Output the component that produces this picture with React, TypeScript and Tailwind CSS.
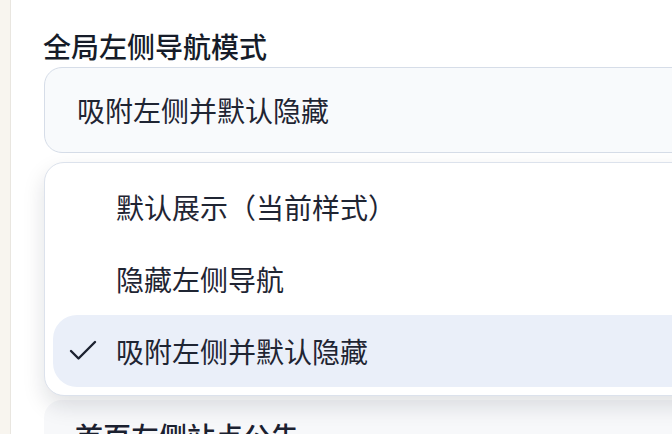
import React, { useState } from 'react';

const options = ['默认展示（当前样式）', '隐藏左侧导航', '吸附左侧并默认隐藏'];

const CheckIcon: React.FC = () => (
  <svg width="36" height="36" viewBox="0 0 24 24" fill="none" stroke="#1c2230" strokeWidth="1.6" strokeLinecap="round" strokeLinejoin="round">
    <path d="M20 6 9 17l-5-5" />
  </svg>
);

const App: React.FC = () => {
  const [selected, setSelected] = useState(options[2]);

  return (
    <div
      className="flex h-[434px] overflow-hidden bg-white text-[#1f2533]"
      style={{ fontFamily: '"Noto Sans CJK SC", "Noto Sans", sans-serif' }}
    >
      {/* side rail */}
      <div className="w-[11px] shrink-0 border-r border-[#e9e6e0] bg-[#f8f5ef]" />

      <div className="flex-1 overflow-hidden pl-[32px] pt-[28px]">
        <label className="block h-[36px] text-[28px] font-medium leading-[36px] text-[#161c29]">
          全局左侧导航模式
        </label>

        {/* select + open menu */}
        <div className="relative ml-px mt-[3px] w-[720px]">
          <button className="flex h-[86px] w-full items-center rounded-[18px] border border-[#d6dde8] bg-[#f8fafc] pl-[32px] text-left text-[28px] leading-none text-[#1f2533]">
            {selected}
          </button>

          <div className="absolute left-0 top-[95px] z-10 w-full rounded-[20px] border border-[#dce2ec] bg-white p-2 shadow-[0_10px_22px_rgba(15,23,42,0.13)]">
            {options.map((opt) => {
              const active = opt === selected;
              return (
                <div
                  key={opt}
                  onClick={() => setSelected(opt)}
                  className={
                    active
                      ? 'flex h-[72px] items-center gap-[15px] rounded-[24px] bg-[#eaeff9] pl-[12px] text-[28px] leading-none'
                      : 'flex h-[72px] items-center gap-[15px] rounded-[24px] pl-[12px] text-[28px] leading-none'
                  }
                >
                  <span className="flex h-9 w-9 items-center justify-center">{active && <CheckIcon />}</span>
                  <span>{opt}</span>
                </div>
              );
            })}
          </div>
        </div>

        {/* next field, mostly covered by the menu */}
        <div className="ml-px mt-[247px] w-[720px] rounded-[18px] bg-[#f7f8fa] pl-[31px] pt-[18px] pb-6">
          <div className="text-[28px] font-medium leading-[36px] text-[#1b2130]">首页左侧站点公告</div>
        </div>
      </div>
    </div>
  );
};

export default App;
